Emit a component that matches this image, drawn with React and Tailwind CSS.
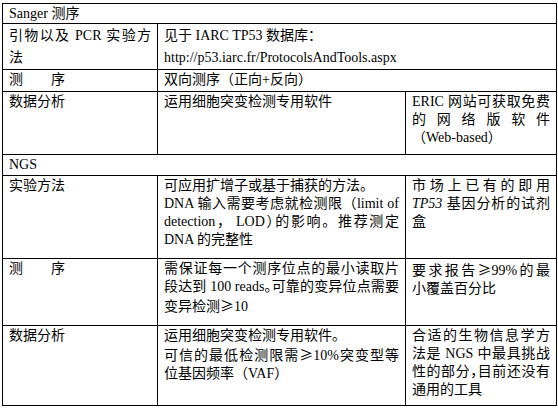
import React from "react";

const J = ({ children }) => (
  <div className="text-justify [text-align-last:justify] whitespace-pre">{children}</div>
);
const L = ({ children }) => <div className="whitespace-pre">{children}</div>;
const H = ({ children }) => <span className="[font-feature-settings:'halt']">{children}</span>;
const G = () => <span className="font-['Noto_Sans_CJK_SC',sans-serif]">≥</span>;

const td = "border border-black px-[6px] pt-[1px] align-top";

const Spread = () => (
  <div className="flex w-[56px] justify-between">
    <span>测</span>
    <span>序</span>
  </div>
);

export default function App() {
  return (
    <div className="w-[558px] h-[409px] bg-white pl-[2px] pt-[3px] font-['Liberation_Serif','Noto_Sans_CJK_SC',serif] text-[14px] leading-[18px] text-black">
      <table className="border-collapse table-fixed w-[554px]">
        <colgroup>
          <col className="w-[155px]" />
          <col className="w-[248px]" />
          <col className="w-[151px]" />
        </colgroup>
        <tbody>
          <tr className="h-[20px]">
            <td colSpan={3} className={td}>Sanger 测序</td>
          </tr>
          <tr className="h-[44px] leading-[22px]">
            <td className={td + " pt-0"}>
              <J>引物以及 PCR 实验方</J>
              <L>法</L>
            </td>
            <td colSpan={2} className={td + " pt-0"}>
              <L>见于 IARC TP53 数据库：</L>
              <L>http://p53.iarc.fr/ProtocolsAndTools.aspx</L>
            </td>
          </tr>
          <tr className="h-[22px]">
            <td className={td}><Spread /></td>
            <td colSpan={2} className={td}>双向测序（正向+反向）</td>
          </tr>
          <tr className="h-[63px]">
            <td className={td}>数据分析</td>
            <td className={td}>运用细胞突变检测专用软件</td>
            <td className={td}>
              <J>ERIC 网站可获取免费</J>
              <J>的网络版软件</J>
              <L>（Web-based）</L>
            </td>
          </tr>
          <tr className="h-[21px]">
            <td colSpan={3} className={td}>NGS</td>
          </tr>
          <tr className="h-[83px]">
            <td className={td}>实验方法</td>
            <td className={td}>
              <L>可应用扩增子或基于捕获的方法。</L>
              <J>DNA 输入需要考虑就检测限（limit of</J>
              <J>detection<H>，</H>  LOD<H>）</H>的影响。推荐测定</J>
              <L>DNA 的完整性</L>
            </td>
            <td className={td}>
              <J>市场上已有的即用</J>
              <J><i>TP53</i> 基因分析的试剂</J>
              <L>盒</L>
            </td>
          </tr>
          <tr className="h-[67px]">
            <td className={td}><Spread /></td>
            <td className={td}>
              <J>需保证每一个测序位点的最小读取片</J>
              <J>段达到 100 reads<H>。</H>可靠的变异位点需要</J>
              <L>变异检测<G />10</L>
            </td>
            <td className={td}>
              <J>要求报告<G />99%的最</J>
              <L>小覆盖百分比</L>
            </td>
          </tr>
          <tr className="h-[80px]">
            <td className={td}>数据分析</td>
            <td className={td}>
              <L>运用细胞突变检测专用软件。</L>
              <J>可信的最低检测限需<G />10%突变型等</J>
              <L>位基因频率（VAF<H>）</H></L>
            </td>
            <td className={td}>
              <J>合适的生物信息学方</J>
              <J>法是 NGS 中最具挑战</J>
              <J>性的部分<H>，</H>目前还没有</J>
              <L>通用的工具</L>
            </td>
          </tr>
        </tbody>
      </table>
    </div>
  );
}
